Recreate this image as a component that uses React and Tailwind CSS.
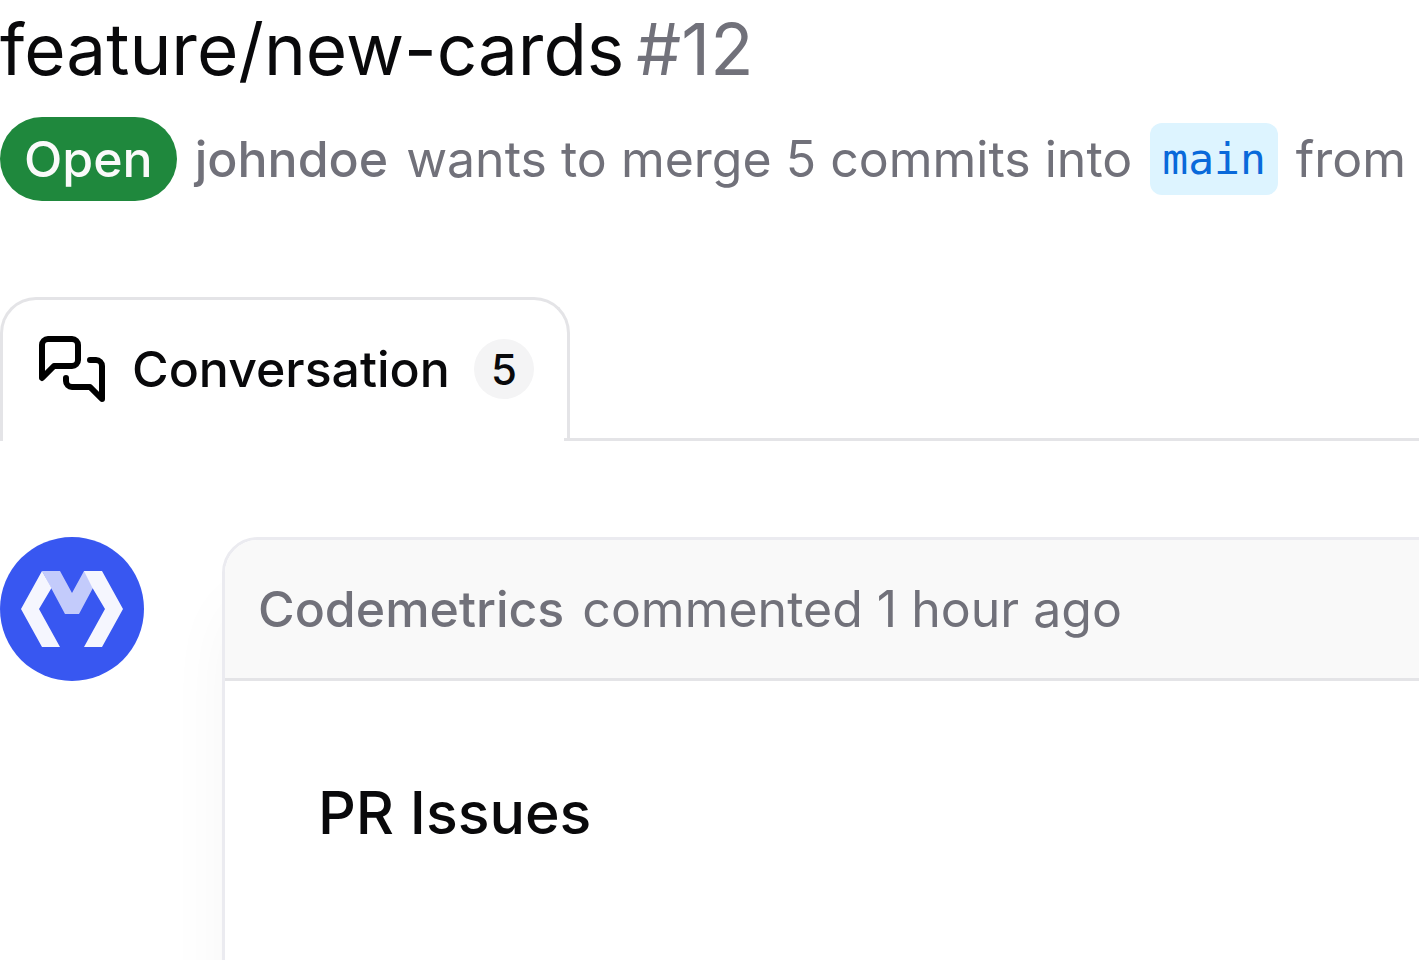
function ConversationIcon() {
  return (
    <svg
      viewBox="0 0 24 24"
      fill="none"
      stroke="black"
      strokeWidth="2"
      strokeLinecap="round"
      strokeLinejoin="round"
      className="size-18 shrink-0"
      aria-hidden="true"
    >
      <path d="M14 9a2 2 0 0 1-2 2H6l-4 4V4a2 2 0 0 1 2-2h8a2 2 0 0 1 2 2z" />
      <path d="M18 9h2a2 2 0 0 1 2 2v11l-4-4h-6a2 2 0 0 1-2-2v-1" />
    </svg>
  );
}

function CodemetricsLogo() {
  return (
    <svg viewBox="0 0 144 144" className="size-36 shrink-0" role="img" aria-label="Codemetrics">
      <circle cx="72" cy="72" r="72" fill="#3857f1" />
      <path d="M42 34h18l12 22 12-22h18L79 77H65z" fill="#c3cbfb" />
      <path d="M42 34l9.500 17L39 72l21 38H42L21 72z" fill="#f5f6fe" />
      <path d="M84 34h18l21 38-21 38H84l21-38-12.500-21z" fill="#f5f6fe" />
    </svg>
  );
}

function PullRequestHeader() {
  return (
    <header>
      <h1 className="flex gap-3 text-[71px] leading-[98px]">
        feature/new-cards <span className="text-[#71717a]">#12</span>
      </h1>
      <div className="mt-[19px] flex items-center gap-[18px] text-[50px] leading-18 text-[#71717a]">
        <span className="rounded-full bg-[#1f883d] px-6 py-[6px] font-medium text-[#fafafa]">Open</span>
        <p className="flex gap-[18px]">
          <span className="font-medium">johndoe</span> wants to merge 5 commits into
        </p>
        <a
          href="#"
          className="rounded-xl bg-[#ddf4ff] px-3 font-['DejaVu_Sans_Mono',monospace] text-[43px] text-[#0969da]"
        >
          main
        </a>
        <span>from</span>
      </div>
    </header>
  );
}

function Tabs() {
  return (
    <nav className="mt-24 flex">
      <button
        type="button"
        className="flex h-36 items-center rounded-t-[36px] border-3 border-b-0 border-[#e4e4e7] px-[33px] pb-[3px] text-[50px] font-medium"
      >
        <ConversationIcon />
        <span className="ml-6">Conversation</span>
        <span className="ml-6 flex size-15 items-center justify-center rounded-full bg-[#f4f4f5] text-[42px]">5</span>
      </button>
      <div className="-ml-[6px] flex-1 border-b-3 border-[#e4e4e7]" />
    </nav>
  );
}

function Comment() {
  return (
    <article className="mt-24 flex items-start">
      <CodemetricsLogo />
      <div className="-mr-20 ml-[78px] min-h-[640px] flex-1 rounded-[36px] border-3 border-[#ebebf0] bg-white shadow-[0_60px_75px_-15px_rgba(0,0,0,0.06)]">
        <div className="flex h-[141px] items-center rounded-t-[33px] border-b-3 border-[#e4e4e7] bg-[#f9f9f9] px-[33px] text-[50px] text-[#71717a]">
          <p className="flex gap-[18px]">
            <span className="font-medium">Codemetrics</span> commented 1 hour ago
          </p>
        </div>
        <h2 className="px-[93px] pt-24 text-[59px] leading-18 font-medium">PR Issues</h2>
      </div>
    </article>
  );
}

export default function App() {
  return (
    <main className="h-screen overflow-hidden bg-white font-['Inter',sans-serif] whitespace-nowrap text-[#09090b]">
      <PullRequestHeader />
      <Tabs />
      <Comment />
    </main>
  );
}
